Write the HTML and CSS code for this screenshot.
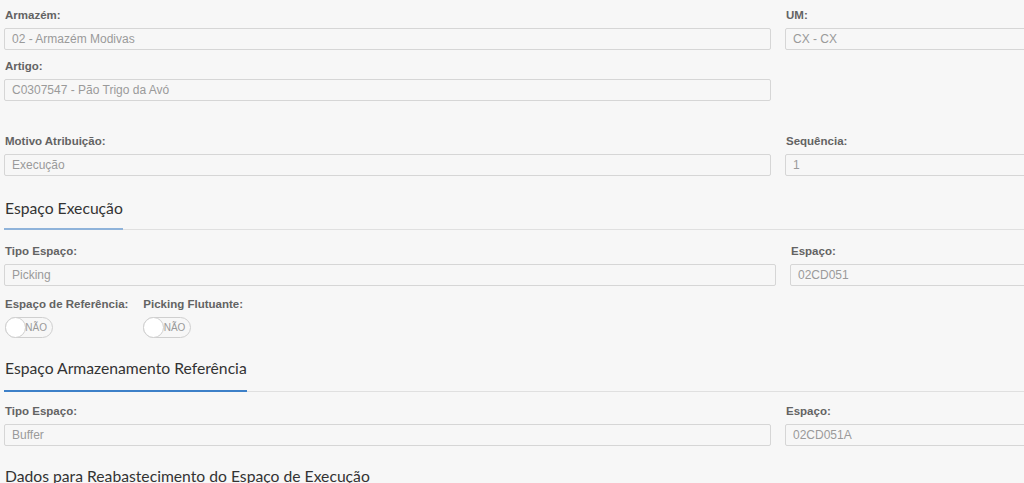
FILE: index.html
```html
<!DOCTYPE html>
<html lang="pt">
<head>
<meta charset="utf-8">
<link rel="stylesheet" href="styles.css">
</head>
<body>
<div class="page">
  <div class="grid g1">
    <div class="field">
      <div class="label">Armazém:</div>
      <div class="input">02 - Armazém Modivas</div>
    </div>
    <div class="field">
      <div class="label">UM:</div>
      <div class="input">CX - CX</div>
    </div>
    <div class="field">
      <div class="label">Artigo:</div>
      <div class="input">C0307547 - Pão Trigo da Avó</div>
    </div>
    <div></div>
  </div>

  <div class="grid g1 sp">
    <div class="field">
      <div class="label">Motivo Atribuição:</div>
      <div class="input">Execução</div>
    </div>
    <div class="field">
      <div class="label">Sequência:</div>
      <div class="input">1</div>
    </div>
  </div>

  <div class="section s1">
    <div class="title first">Espaço Execução</div>
  </div>

  <div class="grid g2">
    <div class="field">
      <div class="label">Tipo Espaço:</div>
      <div class="input">Picking</div>
    </div>
    <div class="field">
      <div class="label">Espaço:</div>
      <div class="input">02CD051</div>
    </div>
  </div>

  <div class="toggles">
    <div class="tfield">
      <div class="label">Espaço de Referência:</div>
      <div class="switch"><span class="knob"></span><span class="txt">NÃO</span></div>
    </div>
    <div class="tfield">
      <div class="label">Picking Flutuante:</div>
      <div class="switch"><span class="knob"></span><span class="txt">NÃO</span></div>
    </div>
  </div>

  <div class="section s2">
    <div class="title second">Espaço Armazenamento Referência</div>
  </div>

  <div class="grid g1 g3">
    <div class="field">
      <div class="label">Tipo Espaço:</div>
      <div class="input">Buffer</div>
    </div>
    <div class="field">
      <div class="label">Espaço:</div>
      <div class="input">02CD051A</div>
    </div>
  </div>

  <div class="section s3">
    <div class="title plain">Dados para Reabastecimento do Espaço de Execução</div>
  </div>
</div>
</body>
</html>
```

FILE: styles.css
```css
html, body {
  margin: 0;
  padding: 0;
  background: #f7f7f7;
  overflow: hidden;
}
body {
  font-family: "Liberation Sans", Arial, sans-serif;
  color: #333;
}
.page {
  width: 1060px;
  padding: 8px 0 0 4px;
}
.grid {
  display: grid;
  column-gap: 14px;
  row-gap: 9px;
}
.g1 { grid-template-columns: 767px 1fr; }
.g2 { grid-template-columns: 772px 1fr; margin-top: 14px; }
.g3 { margin-top: 12px; }
.sp { margin-top: 33px; }
.label {
  font-size: 11.5px;
  line-height: 14px;
  font-weight: bold;
  color: #636363;
  padding-left: 1px;
  margin-bottom: 6px;
  white-space: nowrap;
}
.input {
  box-sizing: border-box;
  height: 22px;
  border: 1px solid #d6d6d6;
  border-radius: 2px;
  background: #f7f7f7;
  font-size: 12px;
  line-height: 20px;
  color: #9a9a9a;
  padding-left: 7px;
  white-space: nowrap;
}
.section {
  border-bottom: 1px solid #e0e0e0;
  display: flex;
}
.title {
  font-family: Lato, "Liberation Sans", sans-serif;
  font-size: 15.7px;
  line-height: 20px;
  color: #333;
  padding: 0 0 10px 1px;
  margin-bottom: -1px;
  border-bottom: 2px solid transparent;
  white-space: nowrap;
}
.title.first { border-bottom-color: #8fb3da; }
.title.second { border-bottom-color: #3d80c8; padding-bottom: 12px; }
.s1 { margin-top: 22px; }
.s2 { margin-top: 20px; }
.s3 { margin-top: 20px; border-bottom: none; }
.toggles {
  display: flex;
  gap: 14px;
  margin-top: 11px;
}
.switch {
  position: relative;
  box-sizing: border-box;
  width: 48px;
  height: 21px;
  border: 1px solid #cfcfcf;
  border-radius: 11px;
  background: #f7f7f7;
  margin-left: 1px;
  margin-top: 2px;
}
.knob {
  position: absolute;
  left: -1px;
  top: -1px;
  width: 21px;
  height: 21px;
  box-sizing: border-box;
  border-radius: 50%;
  background: #fff;
  border: 1px solid #cfcfcf;
}
.txt {
  position: absolute;
  right: 5px;
  top: 0;
  font-size: 10px;
  line-height: 19px;
  color: #999;
}
```
